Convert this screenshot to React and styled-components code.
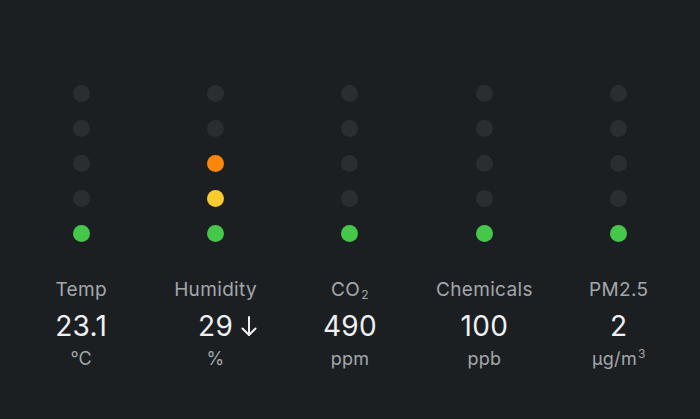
import React from 'react';
import styled, { createGlobalStyle } from 'styled-components';

const GlobalStyle = createGlobalStyle`
  html, body {
    margin: 0;
    padding: 0;
    background: #1c1f22;
  }
  body {
    font-family: Inter, "Noto Sans", sans-serif;
  }
`;

const Panel = styled.div`
  width: 700px;
  height: 419px;
  box-sizing: border-box;
  padding: 85px 14px 0;
  display: grid;
  grid-template-columns: repeat(5, 1fr);
  background: #1c1f22;
`;

const Column = styled.div`
  display: flex;
  flex-direction: column;
  align-items: center;
`;

const Dots = styled.div`
  display: flex;
  flex-direction: column;
  gap: 18px;
  margin-bottom: 36px;
`;

const Dot = styled.div`
  width: 17px;
  height: 17px;
  border-radius: 50%;
  background: ${({ color }) => color || '#2b2e31'};
`;

const Label = styled.div`
  font-size: 19px;
  line-height: 24px;
  color: #a3a7ab;
  letter-spacing: 0.35px;
`;

const Value = styled.div`
  position: relative;
  margin-top: 7px;
  font-size: 28px;
  line-height: 34px;
  color: #eef0f2;
  letter-spacing: 0.3px;
`;

const Trend = styled.span`
  position: absolute;
  left: 100%;
  top: 6px;
  margin-left: 8px;
  display: flex;
`;

const Unit = styled.div`
  margin-top: 5px;
  font-size: 18px;
  line-height: 22px;
  color: #a3a7ab;
  letter-spacing: 0.3px;

  sup {
    font-size: 12px;
    line-height: 0;
    vertical-align: baseline;
    position: relative;
    top: -7px;
    margin-left: 1px;
  }
`;

const Sub = styled.sub`
  font-size: 12px;
  line-height: 0;
  vertical-align: baseline;
  position: relative;
  top: 3px;
  margin-left: 1px;
`;

const GREEN = '#45c74a';
const YELLOW = '#f8cb2e';
const ORANGE = '#fb860b';

const sensors = [
  { label: 'Temp', value: '23.1', unit: '℃', levels: [null, null, null, null, GREEN] },
  { label: 'Humidity', value: '29', unit: '%', trend: true, levels: [null, null, ORANGE, YELLOW, GREEN] },
  { label: <>CO<Sub>2</Sub></>, value: '490', unit: 'ppm', levels: [null, null, null, null, GREEN] },
  { label: 'Chemicals', value: '100', unit: 'ppb', levels: [null, null, null, null, GREEN] },
  { label: 'PM2.5', value: '2', unit: <>μg/m<sup>3</sup></>, levels: [null, null, null, null, GREEN] },
];

const ArrowDown = () => (
  <svg width="16" height="22" viewBox="0 0 16 22" fill="none" stroke="#eef0f2" strokeWidth="2" strokeLinecap="round" strokeLinejoin="round">
    <path d="M8 2v18" />
    <path d="M1.5 13.5 8 20l6.5-6.5" />
  </svg>
);

const App = () => (
  <>
    <GlobalStyle />
    <Panel>
      {sensors.map((s, i) => (
        <Column key={i}>
          <Dots>
            {s.levels.map((c, j) => (
              <Dot key={j} color={c} />
            ))}
          </Dots>
          <Label>{s.label}</Label>
          <Value>
            {s.value}
            {s.trend && (
              <Trend>
                <ArrowDown />
              </Trend>
            )}
          </Value>
          <Unit>{s.unit}</Unit>
        </Column>
      ))}
    </Panel>
  </>
);

export default App;
